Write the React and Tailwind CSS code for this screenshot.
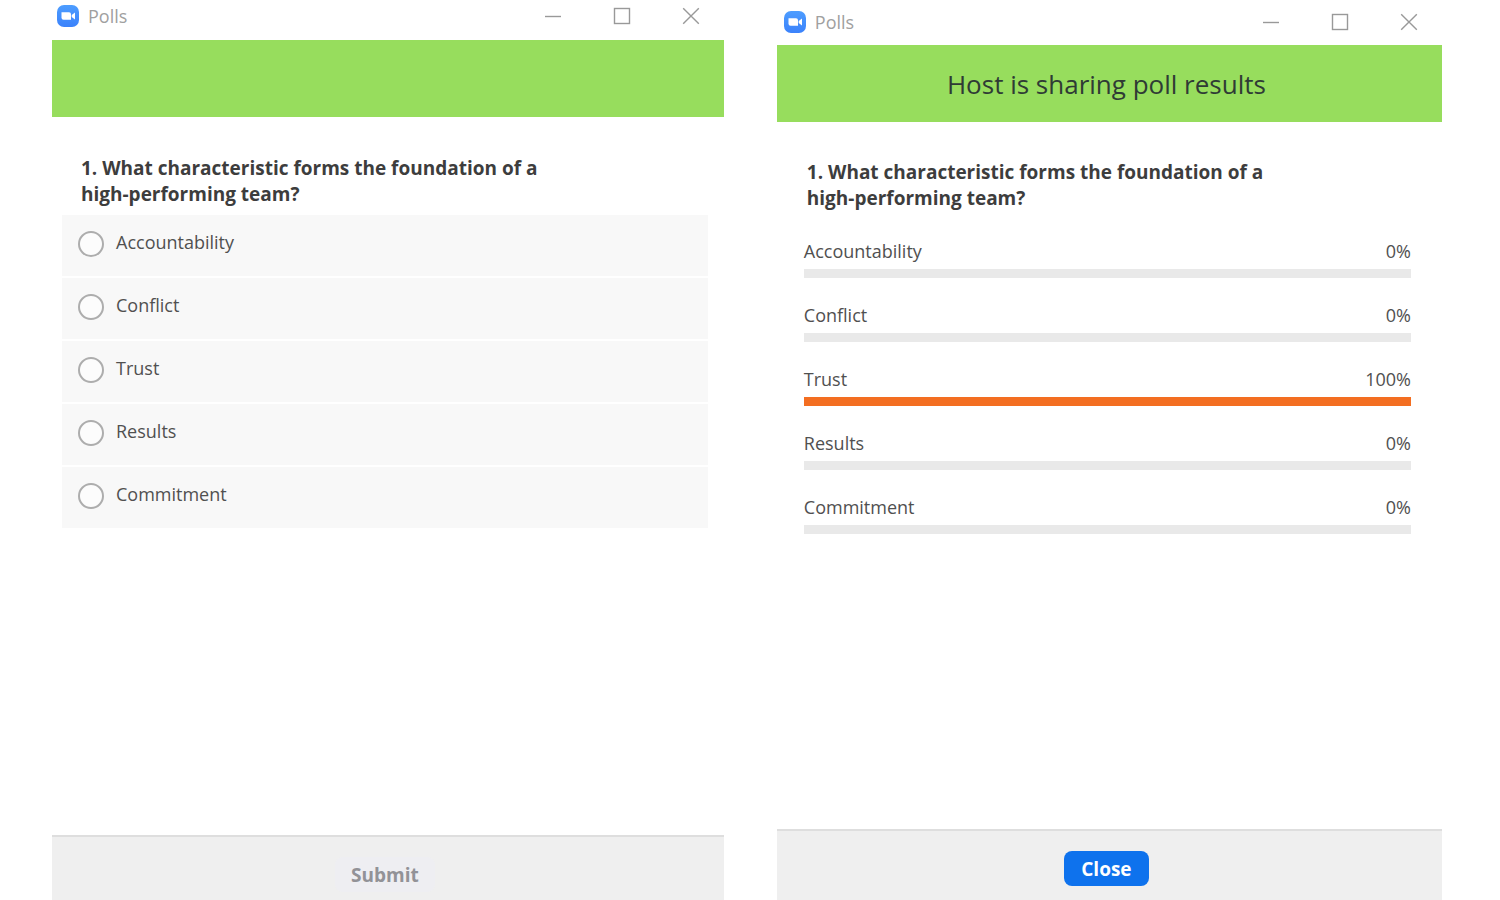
import { useState } from "react";

const OPTIONS = [
  { label: "Accountability", share: 0 },
  { label: "Conflict", share: 0 },
  { label: "Trust", share: 100 },
  { label: "Results", share: 0 },
  { label: "Commitment", share: 0 },
];

const QUESTION = "1. What characteristic forms the foundation of a high-performing team?";

function CameraLogo({ id }) {
  return (
    <svg viewBox="0 0 22 22" className="size-[22px] shrink-0" aria-hidden="true">
      <defs>
        <linearGradient id={id} x1="0" y1="0" x2="0" y2="1">
          <stop offset="0" stopColor="#4d9dff" />
          <stop offset="1" stopColor="#3b82fb" />
        </linearGradient>
      </defs>
      <rect width="22" height="22" rx="7" fill={`url(#${id})`} />
      <path d="M4.5 7.2H12a2 2 0 0 1 2 2v5.6H6.5a2 2 0 0 1-2-2z" fill="#fff" />
      <path d="M14.7 9.9l3.3-2.5v7.2l-3.3-2.5z" fill="#fff" />
    </svg>
  );
}

function WindowButton({ label, children }) {
  return (
    <button type="button" aria-label={label} className="flex h-8 w-[66px] items-center justify-center">
      <svg viewBox="0 0 18 18" className="size-[18px]" fill="none" stroke="#999" strokeWidth="1.4" aria-hidden="true">
        {children}
      </svg>
    </button>
  );
}

function TitleBar({ id, className }) {
  return (
    <header className={`flex items-center ${className}`}>
      <CameraLogo id={id} />
      <h1 className="ml-1.5 flex-1 text-lg leading-6 text-[#a0a0a0]">Polls</h1>
      <WindowButton label="Minimize">
        <path d="M1 9.5h16" />
      </WindowButton>
      <WindowButton label="Maximize">
        <rect x="1.5" y="1.5" width="15" height="15" />
      </WindowButton>
      <WindowButton label="Close window">
        <path d="M1.2 1.2l15.6 15.6M16.8 1.2L1.2 16.8" />
      </WindowButton>
    </header>
  );
}

function VotePanel() {
  const [choice, setChoice] = useState(null);
  return (
    <section className="flex flex-col">
      <TitleBar id="logo-vote" className="h-10 gap-[3px] pb-2 pl-[5px]" />
      <div className="h-[77px] bg-[#97dd5d]" />
      <div role="radiogroup" aria-labelledby="vote-question" className="flex-1 pt-[38px] pr-4 pl-[10px]">
        <h2 id="vote-question" className="ml-[19px] max-w-[480px] text-[19px] leading-[26px] font-bold text-[#3d3d3d]">
          {QUESTION}
        </h2>
        <div className="mt-2 flex flex-col gap-0.5">
          {OPTIONS.map(({ label }) => (
            <label key={label} className="flex h-[61px] items-center bg-[#f8f8f8] pb-1 pl-4 text-lg leading-6 text-[#505050]">
              <input
                type="radio"
                name="answer"
                checked={choice === label}
                onChange={() => setChoice(label)}
                className="mr-3 size-[26px] appearance-none rounded-full border-2 border-[#adadad] bg-[#fcfcfc] checked:border-8 checked:border-[#0e72ed]"
              />
              <span className="pb-[3px]">{label}</span>
            </label>
          ))}
        </div>
      </div>
      <footer className="flex h-[65px] items-center justify-center border-t-2 border-[#dedede] bg-[#efefef] pt-3 pr-1.5">
        <button type="button" disabled={!choice} className="h-[35px] rounded-lg bg-[#eeeef2] px-4 text-[19px] leading-6 font-bold text-[#929297]">
          Submit
        </button>
      </footer>
    </section>
  );
}

function ResultsPanel() {
  return (
    <section className="flex flex-col">
      <TitleBar id="logo-results" className="h-[45px] gap-[3px] pb-0.5 pl-[7px]" />
      <div className="flex h-[77px] items-center justify-center bg-[#97dd5d] pr-1.5 text-[26px] leading-8 text-[#2f3b35]">
        Host is sharing poll results
      </div>
      <div className="flex-1 pt-[37px] pr-[31px] pl-[27px]">
        <h2 className="ml-[3px] max-w-[480px] text-[19px] leading-[26px] font-bold text-[#3d3d3d]">{QUESTION}</h2>
        <ul className="mt-[28px] flex flex-col gap-[25px]">
          {OPTIONS.map(({ label, share }) => (
            <li key={label}>
              <div className="flex justify-between text-lg leading-6 text-[#505050]">
                <span>{label}</span>
                <span>{share}%</span>
              </div>
              <div className="mt-1.5 h-[9px] bg-[#e9e9e9]">
                <div className="h-full bg-[#f36e21]" style={{ width: `${share}%` }} />
              </div>
            </li>
          ))}
        </ul>
      </div>
      <footer className="flex h-[71px] items-center justify-center border-t-2 border-[#dedede] bg-[#efefef] pt-1.5 pr-1.5">
        <button type="button" className="h-[35px] rounded-lg bg-[#0e72ed] px-[17px] text-[19px] leading-6 font-bold text-white">
          Close
        </button>
      </footer>
    </section>
  );
}

export default function App() {
  return (
    <main className="grid min-h-screen grid-cols-[101fr_100fr] gap-[53px] bg-white pr-[58px] pl-[52px] font-['Open_Sans','Noto_Sans',sans-serif]">
      <VotePanel />
      <ResultsPanel />
    </main>
  );
}
